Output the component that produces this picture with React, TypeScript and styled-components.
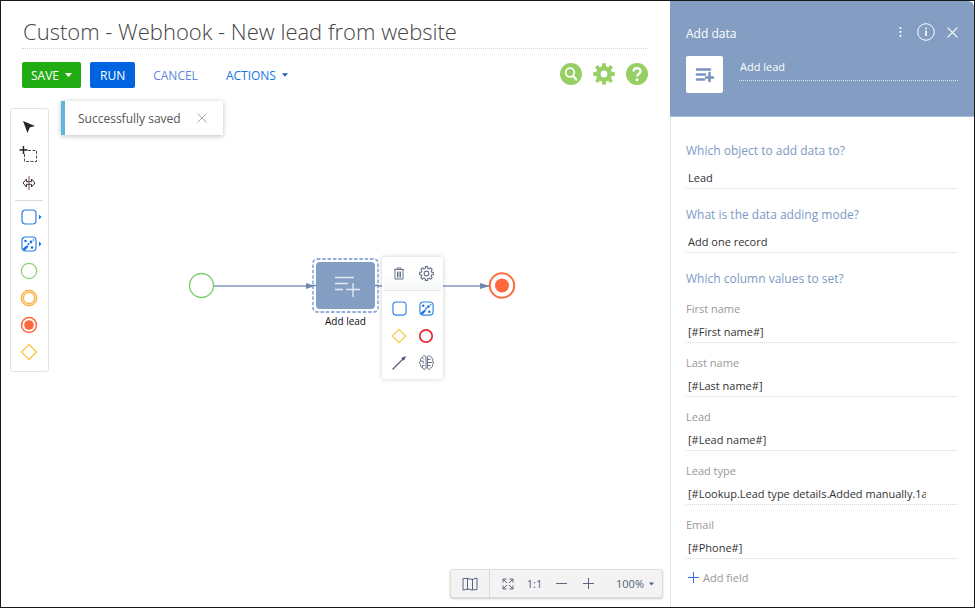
import React from "react";
import styled, { createGlobalStyle, css } from "styled-components";

const GlobalStyle = createGlobalStyle`
  *, *::before, *::after { box-sizing: border-box; }
  body { margin: 0; background: #fff; }
  body, button, input, select { font-family: "Open Sans", "Noto Sans", sans-serif; }
  button { margin: 0; padding: 0; border: 0; background: none; color: inherit; cursor: pointer; }
  svg { display: block; flex: none; }
`;

const steel = "#839dc3";
const rule = "#d4d4d4";

const Frame = styled.div`
  display: flex;
  min-height: 100vh;
  border: 1px solid #17181c;
  background: #fff;
`;

const Designer = styled.main`
  flex: 1;
  min-width: 0;
  display: flex;
  flex-direction: column;
`;

const Header = styled.header`
  display: flex;
  flex-direction: column;
  gap: 13px;
  padding: 14px 22px 0 21px;
`;

const TitleInput = styled.input`
  width: 100%;
  height: 34px;
  padding: 0 1px 2px;
  border: 0;
  border-bottom: 1px dotted ${rule};
  outline: 0;
  font-size: 22px;
  font-weight: 300;
  color: #444;
`;

const ActionBar = styled.div`
  display: flex;
  align-items: center;
  height: 26px;
`;

const ActionButton = styled.button<{ $tone: "green" | "blue" | "plain" | "muted" }>`
  display: flex;
  align-items: center;
  gap: 6px;
  height: 26px;
  padding: 0 9px;
  border-radius: 2px;
  font-size: 12px;
  margin-right: 9px;
  ${({ $tone }) =>
    ({
      green: css`background: #22ac14; color: #fff; font-weight: 500;`,
      blue: css`background: #0064e1; color: #fff; font-weight: 500; padding: 0 10px;`,
      plain: css`color: #1a73e0;`,
      muted: css`color: #5b87dc; margin-right: 10px;`,
    })[$tone]}
`;

const HeaderIcons = styled.div`
  display: flex;
  gap: 11px;
  height: 24px;
  margin-left: auto;
  align-self: flex-start;
`;

const IconButton = styled.button`
  display: flex;
  align-items: center;
  justify-content: center;
`;

const Canvas = styled.section`
  position: relative;
  flex: 1;
  display: flex;
  flex-direction: column;
  justify-content: space-between;
  align-items: flex-start;
  padding: 20px 7px 9px 9px;
`;

const Toast = styled.div`
  position: absolute;
  left: 60px;
  top: 13px;
  display: flex;
  align-items: center;
  gap: 16px;
  height: 34px;
  padding: 0 16px 0 13px;
  border-left: 4px solid #5fb5dc;
  background: #fff;
  box-shadow: 0 1px 5px rgba(0, 0, 0, 0.25);
  font-size: 12px;
  color: #555;
`;

const Palette = styled.div`
  display: flex;
  flex-direction: column;
  width: 39px;
  padding: 4px 5px 6px 4px;
  border: 1px solid #e2e2e2;
  border-radius: 3px;
  background: #fff;
`;

const PaletteButton = styled(IconButton)<{ $tall?: boolean }>`
  height: ${({ $tall }) => ($tall ? 28 : 27)}px;
`;

const Divider = styled.hr`
  width: 100%;
  height: 1px;
  margin: 3px 0 2px;
  border: 0;
  background: #dcdcdc;
`;

const Flow = styled.svg`
  position: absolute;
  left: 184px;
  top: 184px;
`;

const TaskNode = styled.button`
  position: absolute;
  left: 311px;
  top: 170px;
  width: 67px;
  display: flex;
  flex-direction: column;
  align-items: center;
  font-size: 10px;
  line-height: 16px;
  color: #111;
`;

const NodeMenu = styled.div`
  position: absolute;
  left: 381px;
  top: 169px;
  width: 61px;
  padding-bottom: 3px;
  border-radius: 3px;
  background: #fff;
  box-shadow: 0 0 5px rgba(0, 0, 0, 0.2);
`;

const MenuRow = styled.div<{ $head?: boolean }>`
  display: grid;
  grid-template-columns: 27px 27px;
  justify-content: center;
  height: 27px;
  ${({ $head }) =>
    $head &&
    css`
      height: 34px;
      margin: 0 2px 4px;
      border-bottom: 1px solid #e6e8ec;
      background: linear-gradient(#fff 50%, #f7f8f9);
    `}
`;

const ZoomBar = styled.div`
  align-self: flex-end;
  display: flex;
  height: 29px;
  border: 1px solid #dedede;
  border-radius: 3px;
  background: #f3f3f3;
  box-shadow: 0 1px 2px rgba(0, 0, 0, 0.22);
  color: #55617d;
`;

const ZoomButton = styled(IconButton)<{ $edge?: boolean; $wide?: boolean }>`
  width: ${({ $edge, $wide }) => ($wide ? 60 : $edge ? 39 : 27)}px;
  gap: 5px;
  font-size: 11px;
  ${({ $wide }) => $wide && css`padding-left: 6px;`}
  ${({ $edge }) => $edge && css`border-right: 1px solid #dadada;`}
`;

const ZoomGroup = styled.div`
  display: flex;
  padding-left: 4px;
`;

const Panel = styled.aside`
  width: 304px;
  flex: none;
  display: flex;
  flex-direction: column;
  border-left: 1px solid #e4e4e4;
`;

const PanelHeader = styled.header`
  height: 116px;
  margin-left: -1px;
  padding: 19px 16px 0;
  border-bottom: 1px solid #a9bcd9;
  border-top-right-radius: 6px;
  background: ${steel};
  color: #fff;
`;

const PanelTop = styled.div`
  display: flex;
  align-items: flex-start;
  height: 26px;
`;

const PanelTitle = styled.h2`
  flex: 1;
  margin: 0;
  line-height: 28px;
  font-size: 12px;
  font-weight: 500;
`;

const PanelTools = styled.div`
  display: flex;
  align-items: center;
  gap: 12px;
  height: 24px;
`;

const MoreButton = styled(IconButton)`
  width: 10px;
`;

const ElementRow = styled.div`
  display: flex;
  gap: 16px;
  padding-top: 10px;
`;

const ElementIcon = styled.div`
  display: flex;
  align-items: center;
  justify-content: center;
  width: 37px;
  height: 37px;
  border-radius: 2px;
  background: #fff;
`;

const ElementName = styled.input`
  flex: 1;
  min-width: 0;
  height: 25px;
  padding: 0 1px 3px;
  border: 0;
  border-bottom: 1px dotted #dbe4f1;
  outline: 0;
  background: transparent;
  color: #fff;
  font-size: 11px;
  font-weight: 500;
`;

const PanelBody = styled.form`
  display: flex;
  flex-direction: column;
  padding: 24px 17px 0 15px;
`;

const Field = styled.div<{ $question?: boolean }>`
  display: flex;
  flex-direction: column;
  gap: ${({ $question }) => ($question ? 6 : 2)}px;
  margin-bottom: ${({ $question }) => ($question ? 16 : 10)}px;
`;

const questionText = css`
  font-size: 12px;
  color: #7d9ac5;
`;

const FieldLabel = styled.label<{ $question?: boolean }>`
  line-height: 20px;
  font-size: 11px;
  color: #999;
  ${({ $question }) => $question && questionText}
`;

const GroupTitle = styled.h3`
  margin: 0 0 10px;
  line-height: 20px;
  font-weight: 400;
  ${questionText}
`;

const FieldInput = styled.input`
  width: 100%;
  height: 22px;
  padding: 0 31px 1px 2px;
  border: 0;
  border-bottom: 1px dotted ${rule};
  outline: 0;
  font-size: 11px;
  color: #333;
`;

const AddField = styled.button`
  align-self: flex-start;
  display: flex;
  align-items: center;
  gap: 4px;
  height: 17px;
  margin-left: 2px;
  font-size: 11px;
  color: #999;
`;

const Caret = ({ color, size = 7 }: { color: string; size?: number }) => (
  <svg width={size} height="4" viewBox="0 0 7 4">
    <path d="M0 0h7L3.500 4z" fill={color} />
  </svg>
);

const Cross = ({ size, color }: { size: number; color: string }) => (
  <svg width={size} height={size} viewBox="0 0 10 10" stroke={color} strokeWidth="1">
    <path d="M0.500 0.500l9 9M9.500 0.500l-9 9" />
  </svg>
);

const PointerIcon = () => (
  <svg width="22" height="16" viewBox="0 0 22 16">
    <path d="M5 2l12 5-5.300 1.600L9.500 14z" fill="#26262c" />
  </svg>
);

const LassoIcon = () => (
  <svg width="20" height="18" viewBox="0 0 20 18" fill="none">
    <path d="M9 4.500h8.500v11h-12V8" stroke="#5b4361" strokeDasharray="3 1.500" />
    <path d="M4.500 0v8M0.500 4h8" stroke="#222" strokeWidth="1.400" />
  </svg>
);

const SpaceIcon = () => (
  <svg width="14" height="14" viewBox="0 0 14 14" fill="none" stroke="#333">
    <path d="M4.500 3L1 7l3.500 4V8.300h5V11L13 7 9.500 3v2.700h-5z" />
    <path d="M7 0v14" stroke="#7a4a78" />
  </svg>
);

const ActivityIcon = ({ system, arrow, size = 16 }: { system?: boolean; arrow?: boolean; size?: number }) => (
  <svg width={arrow ? 26 : size} height={size} viewBox={arrow ? "-5 0 26 16" : "0 0 16 16"}>
    <rect x="1" y="1" width="14" height="14" rx="3.500" fill="none" stroke="#2d7fe6" strokeWidth="1.200" />
    {system && (
      <g fill="#1a70e0">
        <path d="M2 12.500l4-3.500 1.500 1.500-4 4.500z" />
        <circle cx="4.500" cy="5" r="1.300" />
        <circle cx="10" cy="6" r="1.400" />
        <circle cx="12.500" cy="4" r="0.800" />
        <circle cx="7.500" cy="8" r="1" />
        <circle cx="11" cy="11.500" r="1.300" />
      </g>
    )}
    {arrow && <path d="M18 5.500L20.500 8l-2.500 2.500z" fill="#1a70e0" />}
  </svg>
);

const EventIcon = ({ kind }: { kind: "start" | "middle" | "end" | "stop" }) => (
  <svg width="18" height="18" viewBox="0 0 18 18" fill="none">
    {kind === "start" && <circle cx="9" cy="9" r="7.700" stroke="#8fce74" strokeWidth="1.200" />}
    {kind === "middle" && (
      <>
        <circle cx="9" cy="9" r="7" stroke="#ffd79a" strokeWidth="2.600" />
        <circle cx="9" cy="9" r="7.800" stroke="#fba937" />
        <circle cx="9" cy="9" r="5.500" stroke="#fba937" />
      </>
    )}
    {kind === "end" && (
      <>
        <circle cx="9" cy="9" r="7.500" stroke="#ff6a3c" strokeWidth="1.500" />
        <circle cx="9" cy="9" r="4.800" fill="#ff6a3c" />
      </>
    )}
    {kind === "stop" && <circle cx="9" cy="9" r="6.200" stroke="#e8262d" strokeWidth="1.700" />}
  </svg>
);

const GatewayIcon = ({ size = 18 }: { size?: number }) => (
  <svg width={size} height={size} viewBox="0 0 18 18">
    <path d="M9 1.500L16.500 9 9 16.500 1.500 9z" fill="none" stroke="#fbc83a" strokeWidth="1.300" />
  </svg>
);

const teeth = (count: number, outer: number, inner: number, c: number) => {
  const points: string[] = [];
  for (let i = 0; i < count; i++) {
    const a = (i * 2 * Math.PI) / count - Math.PI / 2;
    const w = Math.PI / count;
    [[-0.62, inner], [-0.42, outer], [0.42, outer], [0.62, inner]].forEach(([k, r]) =>
      points.push(`${(c + r * Math.cos(a + k * w)).toFixed(2)},${(c + r * Math.sin(a + k * w)).toFixed(2)}`)
    );
  }
  return `M${points.join("L")}Z`;
};

const GearOutline = () => (
  <svg width="15" height="15" viewBox="0 0 14 14" fill="none" stroke="#66718a">
    <path d={teeth(8, 6.5, 5, 7)} />
    <circle cx="7" cy="7" r="2.200" />
  </svg>
);

const TrashIcon = () => (
  <svg width="12" height="13" viewBox="0 0 12 13" fill="none" stroke="#66718a">
    <path d="M1 2.500h10M4 2.500v-1.500h4v1.500M2 3v9h8V3M4.500 4.500v6M6 4.500v6M7.500 4.500v6" />
  </svg>
);

const ConnectorIcon = () => (
  <svg width="14" height="14" viewBox="0 0 14 14">
    <path d="M0.500 13.500L11 3" stroke="#4c5874" strokeWidth="1.100" />
    <path d="M14 0l-2 4.800-2.800-2.800z" fill="#4c5874" />
  </svg>
);

const BrainIcon = () => (
  <svg width="15" height="15" viewBox="0 0 15 15" fill="none" stroke="#69748c">
    <path d="M7 1.500C5.500 0 3.500 1 3.300 2.700 1.500 3 1 4.800 1.700 6 0.200 7 0.200 8.800 1.700 9.700 1.200 11.500 2.200 12.500 3.500 12.600 4 14.500 6 14.800 7 13.500z" />
    <path d="M8.500 1.500C10 0 12 1 12.200 2.700 13.800 3 14.200 4.800 13.500 6 14.800 7 14.800 8.800 13.500 9.700 14 11.500 13 12.500 11.700 12.600 11 14.500 9.500 14.800 8.500 13.500z" />
    <path d="M3.300 2.700l1.700 1.800M1.700 6h2.500v2.500M3.500 12.600V10.500h2M8.500 4.500h3M8.500 7.500h5M8.500 10.500h3" />
  </svg>
);

const TaskShape = () => (
  <svg width="67" height="55" viewBox="0 0 67 55">
    <rect x="1" y="1" width="65" height="53" rx="4" fill="#fff" stroke="#6f93d6" strokeWidth="1.300" strokeDasharray="3.500 1.800" />
    <rect x="4" y="4" width="59" height="47" rx="4" fill={steel} />
    <path d="M0 27.500h4M63 27.500h4" stroke="#7088b0" strokeWidth="1.500" />
    <path d="M23 19.500h19M23 25.500h13M23 31.500h8M34 31.500h14M41 25v14" stroke="#e4eaf4" strokeWidth="1.400" fill="none" />
  </svg>
);

const AddDataIcon = () => (
  <svg width="20" height="18" viewBox="0 0 20 18" fill="none" stroke="#7894be">
    <path d="M2 3.500h13M2 8.500h8M2 13.500h7M14.500 7v8M11 11.500h7" strokeLinecap="round" strokeWidth="2.600" />
  </svg>
);

const SearchBadge = () => (
  <svg width="22" height="22" viewBox="0 0 22 22">
    <circle cx="11" cy="11" r="11" fill="#96cf63" />
    <circle cx="10" cy="9.500" r="4.300" fill="none" stroke="#fff" strokeWidth="1.800" />
    <path d="M13 13l3.300 3.500" stroke="#fff" strokeWidth="2.200" strokeLinecap="round" />
  </svg>
);

const GearBadge = () => (
  <svg width="22" height="22" viewBox="0 0 22 22">
    <path d={teeth(8, 11, 8, 11)} fill="#96cf63" />
    <circle cx="11" cy="11" r="3.400" fill="#fff" />
  </svg>
);

const HelpBadge = () => (
  <svg width="22" height="22" viewBox="0 0 22 22">
    <circle cx="11" cy="11" r="11" fill="#96cf63" />
    <path d="M7.500 8.500C7.500 4 14.500 4 14.500 8.300c0 2.700-3.500 2.700-3.500 5.200" fill="none" stroke="#fff" strokeWidth="2.300" />
    <circle cx="11" cy="16.800" r="1.500" fill="#fff" />
  </svg>
);

const MapIcon = () => (
  <svg width="16" height="14" viewBox="0 0 16 14" fill="none" stroke="#59657f">
    <path d="M1 1.500l5 0 4 1 5-1.500v11.500l-5 0.500-4-1-5 1zM5.500 1.500v11M10.500 2v11" />
  </svg>
);

const FitIcon = () => (
  <svg width="12" height="12" viewBox="0 0 12 12" fill="none" stroke="#59657f">
    <path d="M1 4.500V1h3.500M1 1l4 4M7.500 1H11v3.500M11 1L7 5M1 7.500V11h3.500M1 11l4-4M7.500 11H11V7.500M11 11L7 7" />
  </svg>
);

const Sign = ({ plus, color = "#59657f" }: { plus?: boolean; color?: string }) => (
  <svg width="11" height="11" viewBox="0 0 11 11" stroke={color}>
    <path d={plus ? "M0 5.500h11M5.500 0v11" : "M0 5.500h11"} />
  </svg>
);

const DotsIcon = () => (
  <svg width="3" height="12" viewBox="0 0 3 12" fill="#fff">
    <rect x="0.500" y="1" width="1.800" height="1.800" />
    <rect x="0.500" y="5" width="1.800" height="1.800" />
    <rect x="0.500" y="9" width="1.800" height="1.800" />
  </svg>
);

const InfoIcon = () => (
  <svg width="18" height="18" viewBox="0 0 18 18" fill="none" stroke="#fff">
    <circle cx="9" cy="9" r="8.300" />
    <path d="M9 7.500V13M9 4.500v1.700" strokeWidth="1.600" />
  </svg>
);

const questions = [
  { id: "object", label: "Which object to add data to?", value: "Lead" },
  { id: "mode", label: "What is the data adding mode?", value: "Add one record" },
];

const columns = [
  { id: "first", label: "First name", value: "[#First name#]" },
  { id: "last", label: "Last name", value: "[#Last name#]" },
  { id: "lead", label: "Lead", value: "[#Lead name#]" },
  { id: "type", label: "Lead type", value: "[#Lookup.Lead type details.Added manually.1a" },
  { id: "email", label: "Email", value: "[#Phone#]" },
];

export default function App() {
  return (
    <>
      <GlobalStyle />
      <Frame>
        <Designer>
          <Header>
            <TitleInput aria-label="Process title" defaultValue="Custom - Webhook - New lead from website" />
            <ActionBar>
              <ActionButton $tone="green">SAVE <Caret color="#fff" /></ActionButton>
              <ActionButton $tone="blue">RUN</ActionButton>
              <ActionButton $tone="muted">CANCEL</ActionButton>
              <ActionButton $tone="plain">ACTIONS <Caret color="#1f5fb8" size={6} /></ActionButton>
              <HeaderIcons>
                <IconButton aria-label="Search"><SearchBadge /></IconButton>
                <IconButton aria-label="Settings"><GearBadge /></IconButton>
                <IconButton aria-label="Help"><HelpBadge /></IconButton>
              </HeaderIcons>
            </ActionBar>
          </Header>
          <Canvas>
            <Palette role="toolbar" aria-label="Elements">
              <PaletteButton $tall aria-label="Select"><PointerIcon /></PaletteButton>
              <PaletteButton $tall aria-label="Lasso"><LassoIcon /></PaletteButton>
              <PaletteButton $tall aria-label="Space"><SpaceIcon /></PaletteButton>
              <Divider />
              <PaletteButton aria-label="User action"><ActivityIcon arrow /></PaletteButton>
              <PaletteButton aria-label="System action"><ActivityIcon arrow system /></PaletteButton>
              <PaletteButton aria-label="Start event"><EventIcon kind="start" /></PaletteButton>
              <PaletteButton aria-label="Intermediate event"><EventIcon kind="middle" /></PaletteButton>
              <PaletteButton aria-label="End event"><EventIcon kind="end" /></PaletteButton>
              <PaletteButton aria-label="Gateway"><GatewayIcon /></PaletteButton>
            </Palette>

            <Flow width="334" height="28" viewBox="0 0 334 28" fill="none">
              <circle cx="16.500" cy="13.500" r="12" stroke="#7ccc6c" strokeWidth="1.300" />
              <path d="M29 14h284" stroke="#8199c0" strokeWidth="1.500" />
              <path d="M121 11l9 3-9 3zM295 11l10 3-10 3z" fill="#7088b0" />
              <circle cx="317" cy="13.500" r="12.200" fill="#fff" stroke="#ff6a3c" strokeWidth="2" />
              <circle cx="317" cy="13.500" r="7" fill="#ff6a3c" />
            </Flow>
            <TaskNode><TaskShape />Add lead</TaskNode>
            <NodeMenu role="toolbar" aria-label="Element actions">
              <MenuRow $head>
                <IconButton aria-label="Delete"><TrashIcon /></IconButton>
                <IconButton aria-label="Element settings"><GearOutline /></IconButton>
              </MenuRow>
              <MenuRow>
                <IconButton aria-label="Add user action"><ActivityIcon size={15} /></IconButton>
                <IconButton aria-label="Add system action"><ActivityIcon size={15} system /></IconButton>
              </MenuRow>
              <MenuRow>
                <IconButton aria-label="Add gateway"><GatewayIcon size={16} /></IconButton>
                <IconButton aria-label="Add end event"><EventIcon kind="stop" /></IconButton>
              </MenuRow>
              <MenuRow>
                <IconButton aria-label="Connect"><ConnectorIcon /></IconButton>
                <IconButton aria-label="Predict"><BrainIcon /></IconButton>
              </MenuRow>
            </NodeMenu>

            <Toast role="status">
              Successfully saved
              <IconButton aria-label="Dismiss"><Cross size={10} color="#aaa" /></IconButton>
            </Toast>

            <ZoomBar>
              <ZoomButton $edge aria-label="Mini map"><MapIcon /></ZoomButton>
              <ZoomGroup>
                <ZoomButton aria-label="Fit to screen"><FitIcon /></ZoomButton>
                <ZoomButton>1:1</ZoomButton>
                <ZoomButton aria-label="Zoom out"><Sign /></ZoomButton>
                <ZoomButton aria-label="Zoom in"><Sign plus /></ZoomButton>
                <ZoomButton $wide>100% <Caret color="#55617d" size={5} /></ZoomButton>
              </ZoomGroup>
            </ZoomBar>
          </Canvas>
        </Designer>

        <Panel>
          <PanelHeader>
            <PanelTop>
              <PanelTitle>Add data</PanelTitle>
              <PanelTools>
                <MoreButton aria-label="More"><DotsIcon /></MoreButton>
                <IconButton aria-label="Information"><InfoIcon /></IconButton>
                <IconButton aria-label="Close"><Cross size={11} color="#fff" /></IconButton>
              </PanelTools>
            </PanelTop>
            <ElementRow>
              <ElementIcon><AddDataIcon /></ElementIcon>
              <ElementName aria-label="Element name" defaultValue="Add lead" />
            </ElementRow>
          </PanelHeader>
          <PanelBody onSubmit={(e) => e.preventDefault()}>
            {questions.map((q) => (
              <Field key={q.id} $question>
                <FieldLabel $question htmlFor={q.id}>{q.label}</FieldLabel>
                <FieldInput id={q.id} defaultValue={q.value} />
              </Field>
            ))}
            <GroupTitle>Which column values to set?</GroupTitle>
            {columns.map((c) => (
              <Field key={c.id}>
                <FieldLabel htmlFor={c.id}>{c.label}</FieldLabel>
                <FieldInput id={c.id} defaultValue={c.value} />
              </Field>
            ))}
            <AddField type="button"><Sign plus color="#3a6fd8" />Add field</AddField>
          </PanelBody>
        </Panel>
      </Frame>
    </>
  );
}
